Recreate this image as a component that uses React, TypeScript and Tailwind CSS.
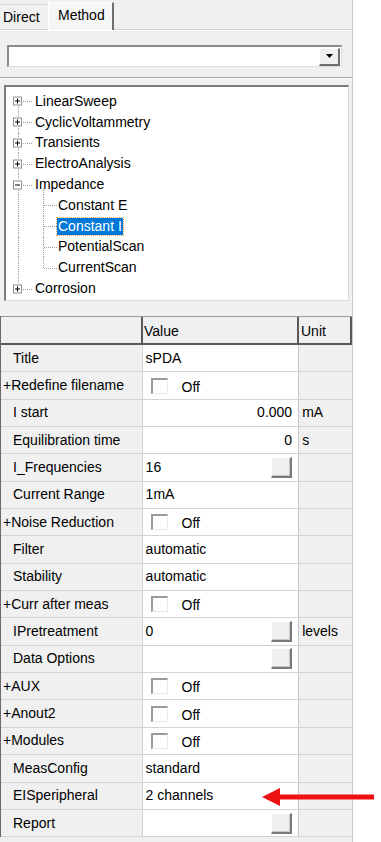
import React from "react";

type TreeItem = { label: string; kind: "plus" | "minus" | "child"; selected?: boolean; last?: boolean };

const treeItems: TreeItem[] = [
  { label: "LinearSweep", kind: "plus" },
  { label: "CyclicVoltammetry", kind: "plus" },
  { label: "Transients", kind: "plus" },
  { label: "ElectroAnalysis", kind: "plus" },
  { label: "Impedance", kind: "minus" },
  { label: "Constant E", kind: "child" },
  { label: "Constant I", kind: "child", selected: true },
  { label: "PotentialScan", kind: "child" },
  { label: "CurrentScan", kind: "child", last: true },
  { label: "Corrosion", kind: "plus" },
];

type Row = {
  label: string;
  plus?: boolean;
  value?: string;
  right?: boolean;
  check?: boolean;
  button?: boolean;
  unit?: string;
};

const rows: Row[] = [
  { label: "Title", value: "sPDA" },
  { label: "Redefine filename", plus: true, check: true },
  { label: "I start", value: "0.000", right: true, unit: "mA" },
  { label: "Equilibration time", value: "0", right: true, unit: "s" },
  { label: "I_Frequencies", value: "16", button: true },
  { label: "Current Range", value: "1mA" },
  { label: "Noise Reduction", plus: true, check: true },
  { label: "Filter", value: "automatic" },
  { label: "Stability", value: "automatic" },
  { label: "Curr after meas", plus: true, check: true },
  { label: "IPretreatment", value: "0", button: true, unit: "levels" },
  { label: "Data Options", button: true },
  { label: "AUX", plus: true, check: true },
  { label: "Anout2", plus: true, check: true },
  { label: "Modules", plus: true, check: true },
  { label: "MeasConfig", value: "standard" },
  { label: "EISperipheral", value: "2 channels" },
  { label: "Report", button: true },
];

const ExpandBox = ({ open }: { open: boolean }) => (
  <div className="absolute left-[7px] top-1/2 -translate-y-1/2 w-[9px] h-[9px] border border-[#919191] bg-white flex items-center justify-center">
    <div className="relative w-[5px] h-[5px]">
      <div className="absolute left-0 top-[2px] w-[5px] h-[1px] bg-black" />
      {!open && <div className="absolute left-[2px] top-0 w-[1px] h-[5px] bg-black" />}
    </div>
  </div>
);

const TreeRow = ({ item, index }: { item: TreeItem; index: number }) => {
  const first = index === 0;
  const lastRoot = index === treeItems.length - 1;
  return (
    <div className="flex items-center h-[20.8px]">
      {item.kind === "child" ? (
        <div className="relative w-[51px] h-full shrink-0">
          <div className="absolute left-[12px] top-0 h-full border-l border-dotted border-[#a0a0a0]" />
          <div
            className={`absolute left-[37px] top-0 border-l border-dotted border-[#a0a0a0] ${item.last ? "h-1/2" : "h-full"}`}
          />
          <div className="absolute left-[38px] top-1/2 w-[13px] border-t border-dotted border-[#a0a0a0]" />
        </div>
      ) : (
        <div className="relative w-[28px] h-full shrink-0">
          <div
            className={`absolute left-[12px] border-l border-dotted border-[#a0a0a0] ${
              first ? "top-1/2 h-1/2" : lastRoot ? "top-0 h-1/2" : "top-0 h-full"
            }`}
          />
          <div className="absolute left-[17px] top-1/2 w-[9px] border-t border-dotted border-[#a0a0a0]" />
          {item.kind === "minus" && (
            <div className="absolute left-[37px] top-[15px] h-[6px] border-l border-dotted border-[#a0a0a0]" />
          )}
          <ExpandBox open={item.kind === "minus"} />
        </div>
      )}
      <span
        className={`leading-[17px] px-[1px] ${
          item.selected
            ? "bg-[#0078d7] text-white outline outline-1 outline-dotted outline-[#e0a050]"
            : "text-black"
        }`}
      >
        {item.label}
      </span>
    </div>
  );
};

const CheckBox = () => (
  <div className="flex items-center">
    <div className="w-[17px] h-[16px] bg-white border-t-2 border-l-2 border-[#9a9a9a] border-r border-b border-r-[#e8e8e8] border-b-[#e8e8e8]" />
    <span className="ml-[14px] mt-[3px]">Off</span>
  </div>
);

const SmallButton = () => (
  <div className="w-[21px] h-[21px] bg-[#f0f0f0] border-t border-l border-white border-r-2 border-b-2 border-r-[#7a7a7a] border-b-[#7a7a7a] shadow-[inset_-1px_-1px_0_#c8c8c8]" />
);

export default function App() {
  return (
    <div
      className="relative w-[381px] h-[842px] bg-white overflow-hidden text-black"
      style={{ fontFamily: '"Liberation Sans", Arial, sans-serif' }}
    >
      <div className="w-[353px] h-full bg-[#f0f0f0] border-r border-[#c8c8c8] flex flex-col">
        {/* tabs */}
        <div className="flex items-end h-[29px] text-[14px]">
          <div className="w-[48px] h-[25px] pl-[3px] pt-[2px] border-t border-[#dadada]">Direct</div>
          <div className="w-[66px] h-[28px] pl-[9px] pt-[2px] bg-[#f6f6f6] border-t border-l border-white border-r-2 border-r-[#6e6e6e] -mb-[1px] relative z-10">
            Method
          </div>
        </div>
        <div className="border-t border-[#d0d0d0] border-b border-b-white" />

        {/* dropdown */}
        <div className="mt-[14px] ml-[7px] w-[335px] h-[22px] bg-white border-t-2 border-l-2 border-[#8a8a8a] border-r border-b border-r-[#dcdcdc] border-b-[#dcdcdc] flex justify-end items-center pr-[1px]">
          <div className="w-[21px] h-[18px] bg-[#f0f0f0] border-t border-l border-white border-r-2 border-b-2 border-r-[#6e6e6e] border-b-[#6e6e6e] flex items-center justify-center">
            <svg width="7" height="4" viewBox="0 0 7 4">
              <polygon points="0,0 7,0 3.5,4" fill="#000" />
            </svg>
          </div>
        </div>
        <div className="mt-[10px] border-t border-[#a8a8a8] border-b border-b-white" />

        {/* tree */}
        <div className="mt-[6px] ml-[4px] w-[345px] h-[216px] bg-white border-t-2 border-l-2 border-[#7c7c7c] border-r border-b border-r-[#dadada] border-b-[#dadada] pt-[4px] text-[14px]">
          {treeItems.map((item, i) => (
            <TreeRow key={item.label} item={item} index={i} />
          ))}
        </div>

        {/* property grid */}
        <div className="mt-[15px] border-l border-[#6a6a6a] text-[14px]">
          <div className="flex h-[29px] border-t border-[#9a9a9a] border-b-2 border-b-[#5a5a5a] bg-[#f0f0f0]">
            <div className="w-[142px] border-r-2 border-[#5a5a5a]" />
            <div className="w-[156px] border-r-2 border-[#5a5a5a] pl-[1px] pt-[4px]">Value</div>
            <div className="w-[53px] border-r-2 border-[#5a5a5a] pl-[2px] pt-[4px]">Unit</div>
          </div>
          {rows.map((r) => (
            <div key={r.label} className="flex h-[27.35px] border-b border-[#d2d2d2]">
              <div
                className={`w-[142px] bg-[#f0f0f0] border-r border-[#d2d2d2] flex items-center ${
                  r.plus ? "pl-[2px]" : "pl-[12px]"
                }`}
              >
                {r.plus ? "+" : ""}
                {r.label}
              </div>
              <div className="w-[157px] bg-white border-r border-[#c4c4c4] flex items-center pl-[3px] pr-[6px]">
                {r.check ? (
                  <div className="ml-[5px]">
                    <CheckBox />
                  </div>
                ) : (
                  <>
                    <span className={r.right ? "ml-auto" : ""}>{r.value}</span>
                    {r.button && (
                      <div className="ml-auto">
                        <SmallButton />
                      </div>
                    )}
                  </>
                )}
              </div>
              <div className="w-[53px] bg-[#f0f0f0] flex items-center pl-[3px]">{r.unit}</div>
            </div>
          ))}
        </div>
      </div>

      {/* red arrow annotation */}
      <svg className="absolute left-[262px] top-[788px]" width="112" height="18" viewBox="0 0 112 18">
        <polygon points="0,9 18,0 18,18" fill="#ee1111" />
        <rect x="17" y="6.5" width="95" height="5" fill="#ee1111" />
      </svg>
    </div>
  );
}
